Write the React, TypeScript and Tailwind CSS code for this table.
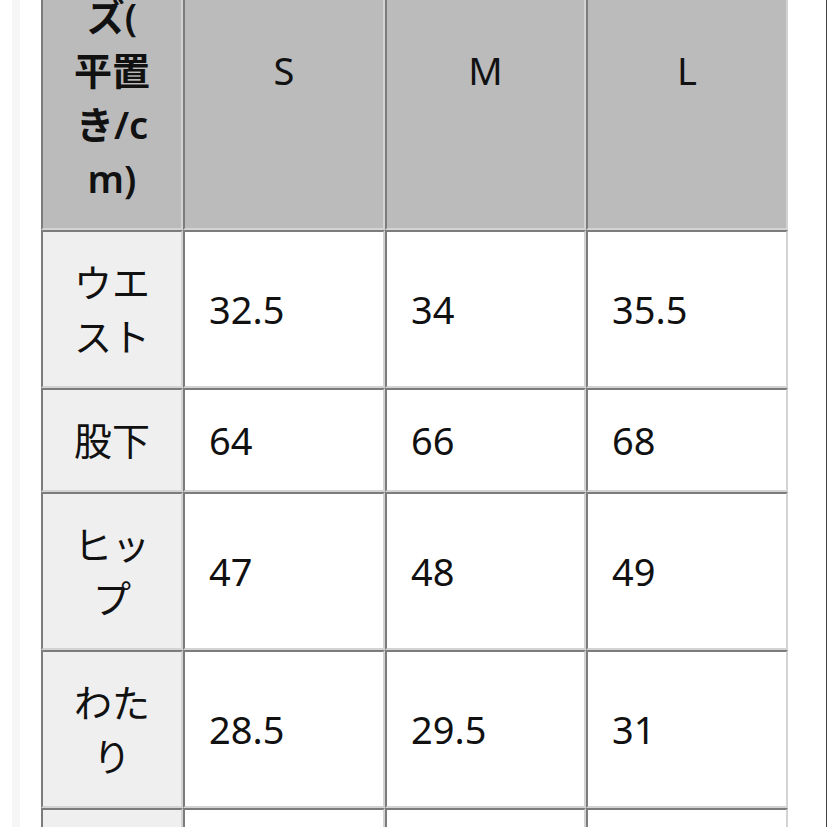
const font = { fontFamily: '"Noto Sans", "Noto Sans CJK JP", sans-serif' };

interface Row {
  label: string[];
  values: string[];
}

const rows: Row[] = [
  { label: ['ウエ', 'スト'], values: ['32.5', '34', '35.5'] },
  { label: ['股下'], values: ['64', '66', '68'] },
  { label: ['ヒッ', 'プ'], values: ['47', '48', '49'] },
  { label: ['わた', 'り'], values: ['28.5', '29.5', '31'] },
  { label: ['着丈'], values: ['96', '98', '100'] },
];

const cell =
  'border-t-2 border-l-2 border-r-2 border-b-2 border-t-[#7c7c7c] border-l-[#7c7c7c] border-r-[#d3d3d3] border-b-[#d3d3d3] pt-[23px] pb-[23px] align-middle';

function Lines({ lines }: { lines: string[] }) {
  return (
    <>
      {lines.map((l, i) => (
        <span key={i} className="block whitespace-nowrap">
          {l}
        </span>
      ))}
    </>
  );
}

export default function App() {
  return (
    <div
      className="flex h-[827px] w-[827px] overflow-hidden border-r border-[#444444] bg-white"
      style={font}
    >
      <div className="w-[12px] shrink-0" />
      <div className="w-[8px] shrink-0 bg-[#f6f6f6]" />
      <div className="w-[21px] shrink-0" />

      <table className="-mt-[90px] h-fit w-[747px] shrink-0 table-fixed border-separate border-spacing-0 text-[38px] leading-[54px] text-[#111111]">
        <colgroup>
          <col className="w-[142px]" />
          <col className="w-[202px]" />
          <col className="w-[201px]" />
          <col className="w-[202px]" />
        </colgroup>

        <thead>
          <tr>
            <th className={`${cell} bg-[#bbbbbb] px-[10px] text-center font-semibold`}>
              <Lines lines={['サイ', 'ズ(', '平置', 'き/c', 'm)']} />
            </th>
            {['S', 'M', 'L'].map(s => (
              <th key={s} className={`${cell} bg-[#bbbbbb] text-center font-normal`}>
                {s}
              </th>
            ))}
          </tr>
        </thead>

        <tbody>
          {rows.map(row => (
            <tr key={row.label.join('')}>
              <td className={`${cell} bg-[#efefef] px-[10px] text-center`}>
                <Lines lines={row.label} />
              </td>
              {row.values.map((v, i) => (
                <td key={i} className={`${cell} bg-white pl-[24px]`}>
                  {v}
                </td>
              ))}
            </tr>
          ))}
        </tbody>
      </table>
    </div>
  );
}
